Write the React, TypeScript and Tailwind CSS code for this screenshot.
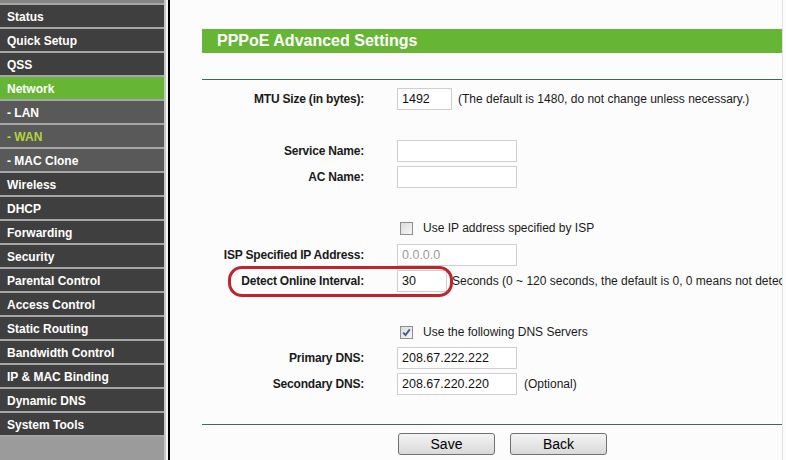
import React from "react";

type MenuItem = { label: string; kind?: "active" | "sub" | "current" };

const menu: MenuItem[] = [
  { label: "Status" },
  { label: "Quick Setup" },
  { label: "QSS" },
  { label: "Network", kind: "active" },
  { label: "- LAN", kind: "sub" },
  { label: "- WAN", kind: "current" },
  { label: "- MAC Clone", kind: "sub" },
  { label: "Wireless" },
  { label: "DHCP" },
  { label: "Forwarding" },
  { label: "Security" },
  { label: "Parental Control" },
  { label: "Access Control" },
  { label: "Static Routing" },
  { label: "Bandwidth Control" },
  { label: "IP & MAC Binding" },
  { label: "Dynamic DNS" },
  { label: "System Tools" },
];

function Sidebar() {
  return (
    <div className="w-[164px] h-full bg-[#9b9b9b] flex flex-col">
      <div className="h-[3px] bg-[#858585]" />
      <div className="bg-[#a6a6a6] pt-[2px]">
        {menu.map((item) => {
          let cls = "bg-[#3f3f3f] text-white";
          if (item.kind === "active") cls = "bg-[#67b534] text-white";
          if (item.kind === "sub") cls = "bg-[#595959] text-white";
          if (item.kind === "current") cls = "bg-[#595959] text-[#b4d43a]";
          return (
            <div
              key={item.label}
              className={`h-[22px] mb-[2px] flex items-center pl-[7px] pt-[1px] text-[12px] font-bold whitespace-nowrap ${cls}`}
            >
              {item.label}
            </div>
          );
        })}
      </div>
    </div>
  );
}

function Input({ value, width, disabled }: { value?: string; width: number; disabled?: boolean }) {
  return (
    <div
      className={`h-[22px] border border-[#cfcfcf] bg-white pl-[4px] flex items-center text-[12.5px] shrink-0 ${
        disabled ? "text-[#9a9a9a]" : "text-[#111]"
      }`}
      style={{ width }}
    >
      {value}
    </div>
  );
}

function Checkbox({ checked }: { checked?: boolean }) {
  return (
    <span className="w-[13px] h-[13px] border border-[#8f8f8f] bg-gradient-to-br from-[#dcdcdc] to-[#f7f7f7] flex items-center justify-center shrink-0">
      {checked && (
        <svg width="9" height="9" viewBox="0 0 9 9">
          <path d="M1.2 4.6 L3.5 7 L7.8 1.4" fill="none" stroke="#3d5a8c" strokeWidth="1.8" />
        </svg>
      )}
    </span>
  );
}

function Row({
  label,
  children,
  className = "",
}: {
  label?: string;
  children: React.ReactNode;
  className?: string;
}) {
  return (
    <div className={`relative flex items-center h-[22px] whitespace-nowrap ${className}`}>
      <div className="w-[162px] shrink-0 text-right font-bold text-[12px] tracking-[-0.2px] text-[#1a1a1a]">{label}</div>
      <div className="ml-[33px] flex items-center text-[12px] text-[#1a1a1a]">{children}</div>
    </div>
  );
}

function Button({ children }: { children: React.ReactNode }) {
  return (
    <button className="w-[97px] h-[22px] rounded-[3px] border border-[#707070] bg-gradient-to-b from-[#f4f4f4] to-[#d9d9d9] text-[14px] text-black leading-none shrink-0">
      {children}
    </button>
  );
}

export default function App() {
  return (
    <div className="flex w-[786px] h-[460px] overflow-hidden bg-[#fcfcfc] font-['Liberation_Sans',Arial,sans-serif]">
      <Sidebar />
      <div className="w-[2px] bg-[#c6c6c6]" />
      <div className="w-[2px] bg-[#f4f4f4]" />
      <div className="w-[2px] bg-black" />
      <div className="flex-1 flex">
        <div className="ml-[32px] w-[580px] pt-[29px] overflow-hidden">
          <div className="h-[24px] bg-[#67b534] flex items-center pl-[15px] text-white font-bold text-[16px]">
            PPPoE Advanced Settings
          </div>
          <div className="mt-[26px] h-[1px] bg-[#3b6b50]" />

          <Row label="MTU Size (in bytes):" className="mt-[8px]">
            <Input value="1492" width={55} />
            <span className="ml-[6px]">(The default is 1480, do not change unless necessary.)</span>
          </Row>

          <Row label="Service Name:" className="mt-[30px]">
            <Input width={120} />
          </Row>
          <Row label="AC Name:" className="mt-[4px]">
            <Input width={120} />
          </Row>

          <Row className="mt-[29px]">
            <span className="ml-[3px]" />
            <Checkbox />
            <span className="ml-[10px]">Use IP address specified by ISP</span>
          </Row>
          <Row label="ISP Specified IP Address:" className="mt-[5px]">
            <Input value="0.0.0.0" width={120} disabled />
          </Row>
          <Row label="Detect Online Interval:" className="mt-[4px]">
            <Input value="30" width={50} />
            <span className="ml-[5px]">Seconds (0 ~ 120 seconds, the default is 0, 0 means not detecting.)</span>
            <span className="absolute left-[26px] top-[-4px] w-[225px] h-[31px] rounded-[14px] border-[3px] border-[#c0252d]" />
          </Row>

          <Row className="mt-[29px]">
            <span className="ml-[3px]" />
            <Checkbox checked />
            <span className="ml-[10px]">Use the following DNS Servers</span>
          </Row>
          <Row label="Primary DNS:" className="mt-[4px]">
            <Input value="208.67.222.222" width={120} />
          </Row>
          <Row label="Secondary DNS:" className="mt-[4px]">
            <Input value="208.67.220.220" width={120} />
            <span className="ml-[7px]">(Optional)</span>
          </Row>

          <div className="mt-[29px] h-[1px] bg-[#3b6b50]" />
          <div className="mt-[8px] flex">
            <div className="ml-[196px] flex gap-[15px]">
              <Button>Save</Button>
              <Button>Back</Button>
            </div>
          </div>
        </div>
        <div className="w-[1px] bg-[#e2e2e2]" />
      </div>
    </div>
  );
}
